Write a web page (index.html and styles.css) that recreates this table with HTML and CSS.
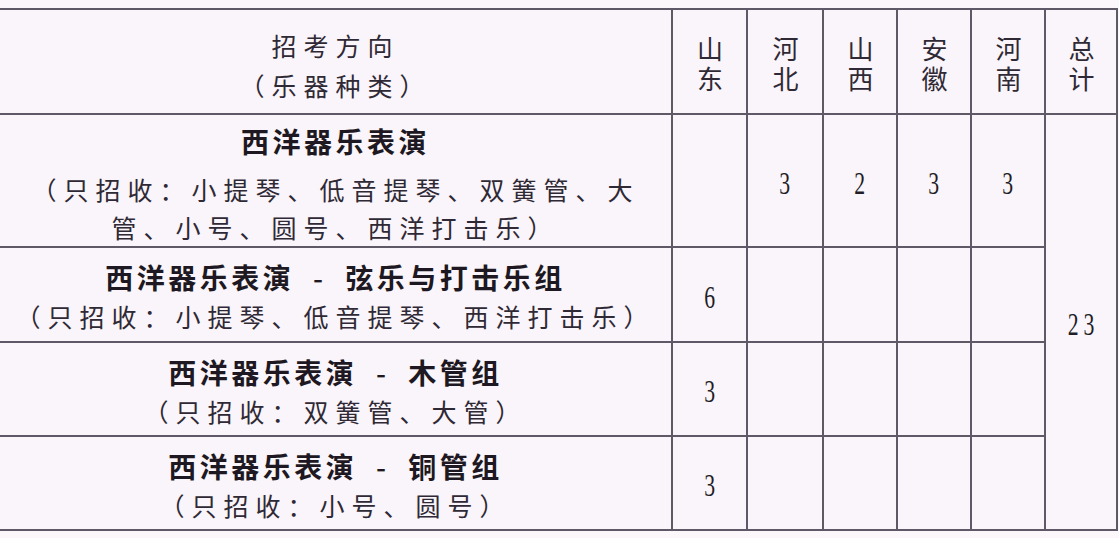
FILE: index.html
```html
<!DOCTYPE html>
<html lang="zh-CN">
<head>
<meta charset="utf-8">
<title>招考方向</title>
<link rel="stylesheet" href="styles.css">
</head>
<body>
<div class="sheet">
  <div class="grid">
    <div class="cell head-main">
      <div class="line">招考方向</div>
      <div class="line">（乐器种类）</div>
    </div>
    <div class="cell head-prov"><span class="vt">山东</span></div>
    <div class="cell head-prov"><span class="vt">河北</span></div>
    <div class="cell head-prov"><span class="vt">山西</span></div>
    <div class="cell head-prov"><span class="vt">安徽</span></div>
    <div class="cell head-prov"><span class="vt">河南</span></div>
    <div class="cell head-prov"><span class="vt">总计</span></div>

    <div class="cell num total"><span class="digits wide">23</span></div>

    <div class="cell desc r1">
      <div class="title">西洋器乐表演</div>
      <div class="sub">（只招收：小提琴、低音提琴、双簧管、大</div>
      <div class="sub">管、小号、圆号、西洋打击乐）</div>
    </div>
    <div class="cell num"></div>
    <div class="cell num"><span class="digits">3</span></div>
    <div class="cell num"><span class="digits">2</span></div>
    <div class="cell num"><span class="digits">3</span></div>
    <div class="cell num"><span class="digits">3</span></div>

    <div class="cell desc">
      <div class="title">西洋器乐表演<span class="sep"> - </span>弦乐与打击乐组</div>
      <div class="sub">（只招收：小提琴、低音提琴、西洋打击乐）</div>
    </div>
    <div class="cell num"><span class="digits">6</span></div>
    <div class="cell num"></div>
    <div class="cell num"></div>
    <div class="cell num"></div>
    <div class="cell num"></div>

    <div class="cell desc">
      <div class="title">西洋器乐表演<span class="sep"> - </span>木管组</div>
      <div class="sub">（只招收：双簧管、大管）</div>
    </div>
    <div class="cell num"><span class="digits">3</span></div>
    <div class="cell num"></div>
    <div class="cell num"></div>
    <div class="cell num"></div>
    <div class="cell num"></div>

    <div class="cell desc">
      <div class="title">西洋器乐表演<span class="sep"> - </span>铜管组</div>
      <div class="sub">（只招收：小号、圆号）</div>
    </div>
    <div class="cell num"><span class="digits">3</span></div>
    <div class="cell num"></div>
    <div class="cell num"></div>
    <div class="cell num"></div>
    <div class="cell num"></div>
  </div>
</div>
</body>
</html>
```

FILE: styles.css
```css
html, body {
  margin: 0;
  padding: 0;
  background: #fbf7fb;
}

body {
  width: 1119px;
  height: 538px;
  overflow: hidden;
  font-family: "Noto Sans CJK SC", "Noto Sans", sans-serif;
  color: #2f2935;
}

.sheet {
  padding-top: 8px;
}

.grid {
  display: grid;
  grid-template-columns: 671px 73px 74px 72px 72px 72px 70px;
  grid-template-rows: 103px 131px 93px 92px 92px;
  gap: 2px;
  padding: 2px 2px 2px 0;
  width: 1116px;
  background: #5f5867;
}

.cell {
  background: #faf5fa;
  display: flex;
  flex-direction: column;
  align-items: center;
  justify-content: center;
  text-align: center;
  white-space: nowrap;
}

.head-main {
  font-size: 25px;
  font-weight: 400;
  letter-spacing: 7px;
  line-height: 40px;
  padding-top: 7px;
  box-sizing: border-box;
}

.head-prov {
  font-size: 26px;
  font-weight: 400;
  padding-top: 8px;
  box-sizing: border-box;
}

.head-prov .vt {
  writing-mode: vertical-rl;
  text-orientation: upright;
  letter-spacing: 4px;
  line-height: 30px;
}

.desc {
  box-sizing: border-box;
  padding-top: 3px;
}

.desc .title {
  font-size: 28px;
  font-weight: 700;
  letter-spacing: 3.5px;
  line-height: 40px;
  color: #1d1821;
}

.desc .sep {
  margin: 0 9px;
  font-weight: 500;
}

.desc .sub {
  font-size: 25px;
  font-weight: 400;
  letter-spacing: 7px;
  line-height: 38px;
}

.r1 {
  padding-top: 6px;
}

.r1 .title {
  margin-bottom: 9px;
}

.num {
  box-sizing: border-box;
  padding-top: 6px;
}

.total {
  grid-column: 7;
  grid-row: 2 / span 4;
}

.digits {
  display: inline-block;
  font-family: "Liberation Serif", "Times New Roman", serif;
  font-size: 31px;
  line-height: 34px;
  color: #221c27;
  transform: scaleX(0.7);
}

.digits.wide {
  letter-spacing: 7px;
  padding-left: 7px;
}
```
